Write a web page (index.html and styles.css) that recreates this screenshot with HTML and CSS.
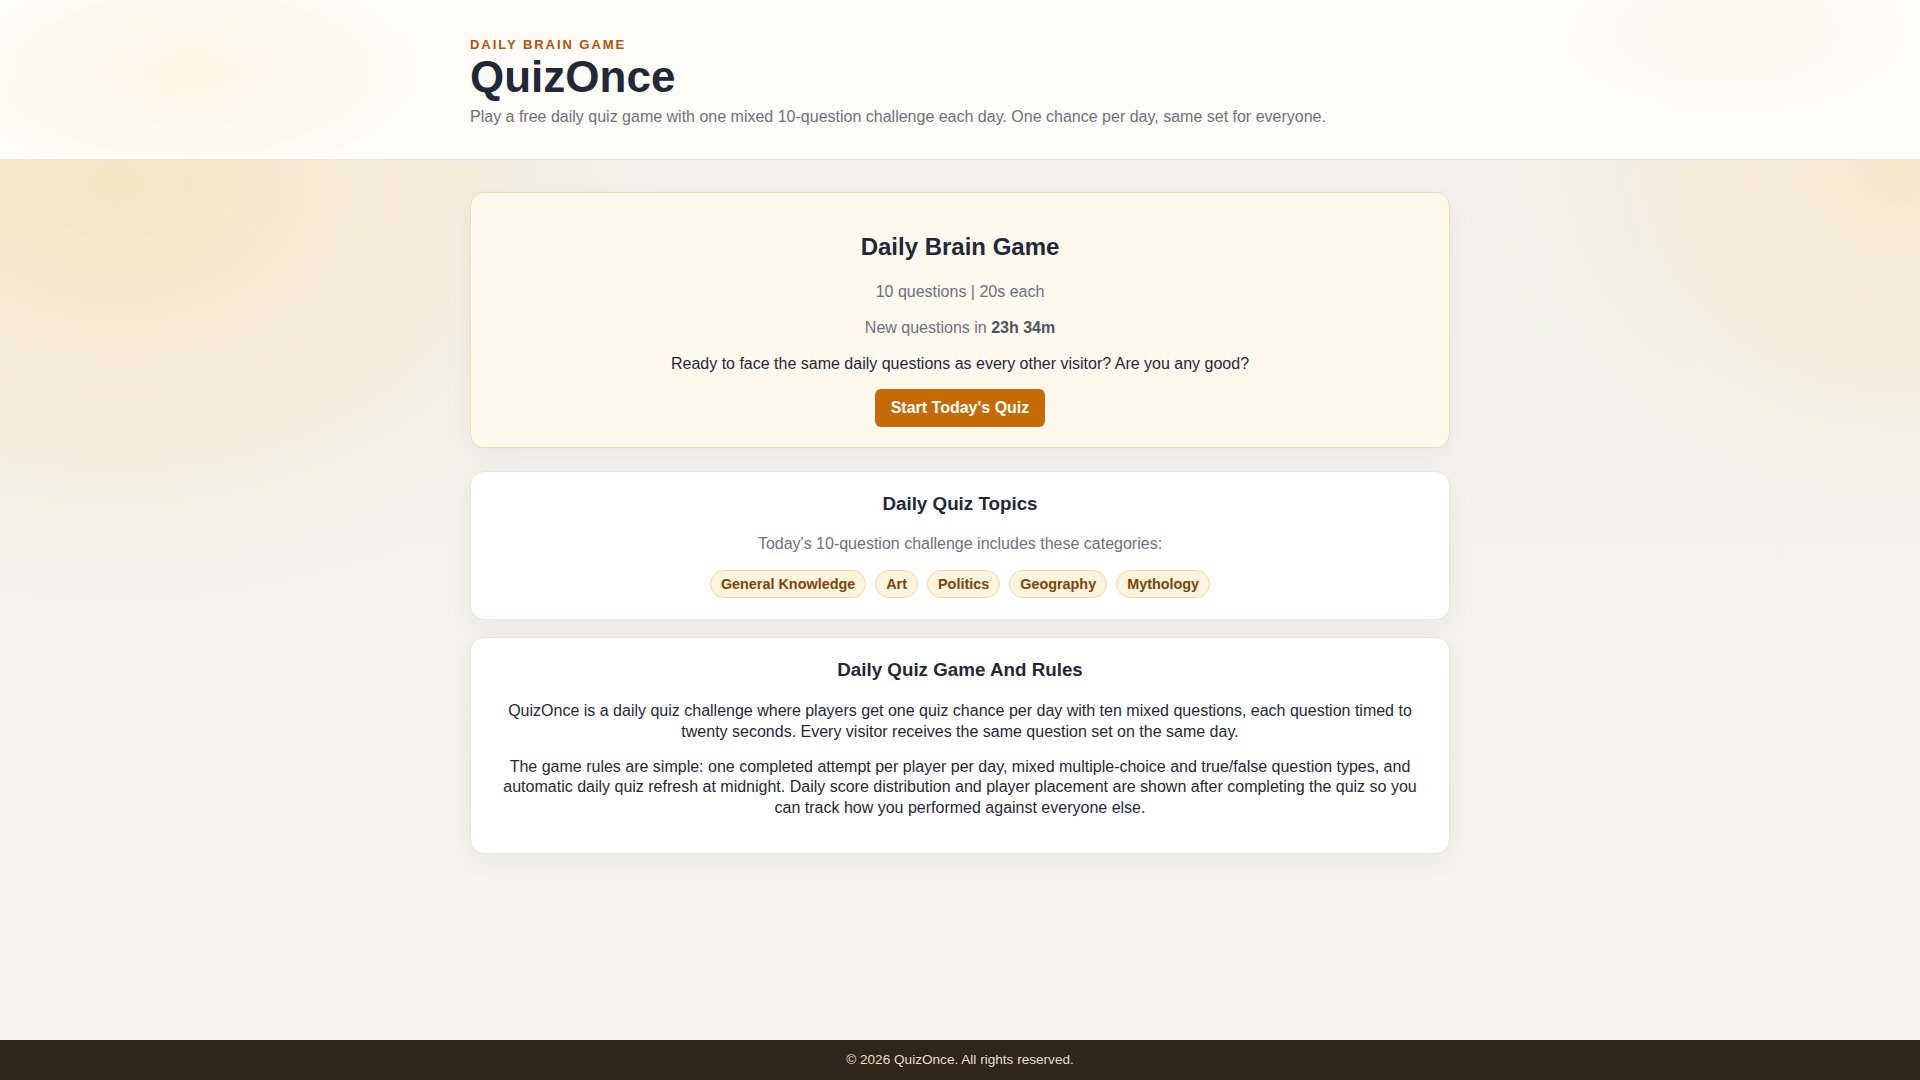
FILE: index.html
```html
<!DOCTYPE html>
<html lang="en">
<head>
<meta charset="utf-8">
<title>QuizOnce - Daily Brain Game</title>
<link rel="stylesheet" href="styles.css">
</head>
<body>
<header class="site-header">
  <div class="container">
    <div class="eyebrow">DAILY BRAIN GAME</div>
    <h1 class="brand">QuizOnce</h1>
    <p class="tagline">Play a free daily quiz game with one mixed 10-question challenge each day. One chance per day, same set for everyone.</p>
  </div>
</header>
<main class="main">
  <div class="container">
    <section class="card card-hero">
      <h2 class="hero-title">Daily Brain Game</h2>
      <p class="meta">10 questions | 20s each</p>
      <p class="meta">New questions in <strong>23h 34m</strong></p>
      <p class="intro">Ready to face the same daily questions as every other visitor? Are you any good?</p>
      <button class="btn-start" type="button">Start Today's Quiz</button>
    </section>
    <section class="card card-topics">
      <h2 class="card-title">Daily Quiz Topics</h2>
      <p class="meta topics-lead">Today's 10-question challenge includes these categories:</p>
      <div class="chips">
        <span class="chip">General Knowledge</span>
        <span class="chip">Art</span>
        <span class="chip">Politics</span>
        <span class="chip">Geography</span>
        <span class="chip">Mythology</span>
      </div>
    </section>
    <section class="card card-rules">
      <h2 class="card-title">Daily Quiz Game And Rules</h2>
      <p class="rules-text">QuizOnce is a daily quiz challenge where players get one quiz chance per day with ten mixed questions, each question timed to twenty seconds. Every visitor receives the same question set on the same day.</p>
      <p class="rules-text">The game rules are simple: one completed attempt per player per day, mixed multiple-choice and true/false question types, and automatic daily quiz refresh at midnight. Daily score distribution and player placement are shown after completing the quiz so you can track how you performed against everyone else.</p>
    </section>
  </div>
</main>
<footer class="site-footer">© 2026 QuizOnce. All rights reserved.</footer>
</body>
</html>
```

FILE: styles.css
```css
* { box-sizing: border-box; }

html, body { height: 100%; }

body {
  margin: 0;
  min-height: 100vh;
  display: flex;
  flex-direction: column;
  font-family: "Liberation Sans", Arial, Helvetica, sans-serif;
  color: #1f2937;
  background:
    radial-gradient(ellipse 560px 420px at 6% 17%, rgba(247, 218, 168, 0.6), rgba(247, 218, 168, 0) 100%),
    radial-gradient(ellipse 420px 380px at 99% 15%, rgba(247, 222, 178, 0.55), rgba(247, 222, 178, 0) 100%),
    linear-gradient(180deg, #f3f1ec 0%, #f5f3ee 60%, #f6f4f0 100%);
}

.container {
  width: 980px;
  margin: 0 auto;
}

.site-header {
  padding: 37px 0 30px;
  background:
    radial-gradient(ellipse 260px 120px at 10% 45%, rgba(252, 238, 216, 0.6), rgba(252, 238, 216, 0) 100%),
    radial-gradient(ellipse 240px 110px at 90% 20%, rgba(252, 242, 228, 0.5), rgba(252, 242, 228, 0) 100%),
    rgba(255, 253, 249, 0.94);
  border-bottom: 1px solid #ece5d9;
}

.eyebrow {
  font-size: 13px;
  line-height: 16px;
  font-weight: 700;
  letter-spacing: 0.15em;
  color: #b45309;
}

.brand {
  margin: 0;
  font-size: 44px;
  line-height: 48px;
  font-weight: 700;
  color: #1f2937;
}

.tagline {
  margin: 4px 0 0;
  font-size: 16px;
  line-height: 24px;
  color: #6b7280;
}

.main {
  flex: 1;
  padding-top: 32px;
}

.card {
  border-radius: 14px;
  border: 1px solid #ebe5da;
  background: #ffffff;
  text-align: center;
  box-shadow: 0 8px 24px rgba(60, 40, 10, 0.05);
}

.card-hero {
  background: #fef8ed;
  border-color: #f0ddb6;
  padding: 39px 32px 20px;
  margin-bottom: 23px;
}

.hero-title {
  margin: 0 0 18px;
  font-size: 24px;
  line-height: 30px;
  font-weight: 700;
  color: #1f2937;
}

.meta {
  margin: 0 0 12px;
  font-size: 16px;
  line-height: 24px;
  color: #6b7280;
}

.meta strong {
  color: #4b5563;
}

.intro {
  margin: 0 0 13px;
  font-size: 16px;
  line-height: 24px;
  color: #1f2937;
}

.btn-start {
  font-family: inherit;
  font-size: 16px;
  line-height: 24px;
  font-weight: 700;
  color: #ffffff;
  background: #c66a08;
  border: 0;
  border-radius: 6px;
  padding: 7px 16px;
  cursor: pointer;
  display: inline-block;
  vertical-align: top;
}

.card-topics {
  padding: 20px 32px 21px;
  margin-bottom: 17px;
}

.card-title {
  margin: 0 0 16px;
  font-size: 18.8px;
  line-height: 24px;
  font-weight: 700;
  color: #1f2937;
}

.topics-lead {
  margin: 0 0 14px;
}

.chips {
  display: flex;
  flex-wrap: wrap;
  justify-content: center;
  gap: 9px;
}

.chip {
  display: inline-block;
  font-size: 14.4px;
  line-height: 16px;
  font-weight: 700;
  color: #7c4508;
  background: #fef3dd;
  border: 1px solid #f5d9a2;
  border-radius: 999px;
  padding: 5px 10px;
}

.card-rules {
  padding: 20px 32px 18px;
}

.card-rules .card-title {
  margin-bottom: 19px;
}

.rules-text {
  margin: 0 0 14px;
  font-size: 16px;
  line-height: 20.8px;
  color: #1f2937;
}

.rules-text:last-child {
  margin-bottom: 16px;
}

.site-footer {
  height: 40px;
  line-height: 40px;
  text-align: center;
  font-size: 13.6px;
  color: #e9dfcf;
  background: #2f2518;
}
```
